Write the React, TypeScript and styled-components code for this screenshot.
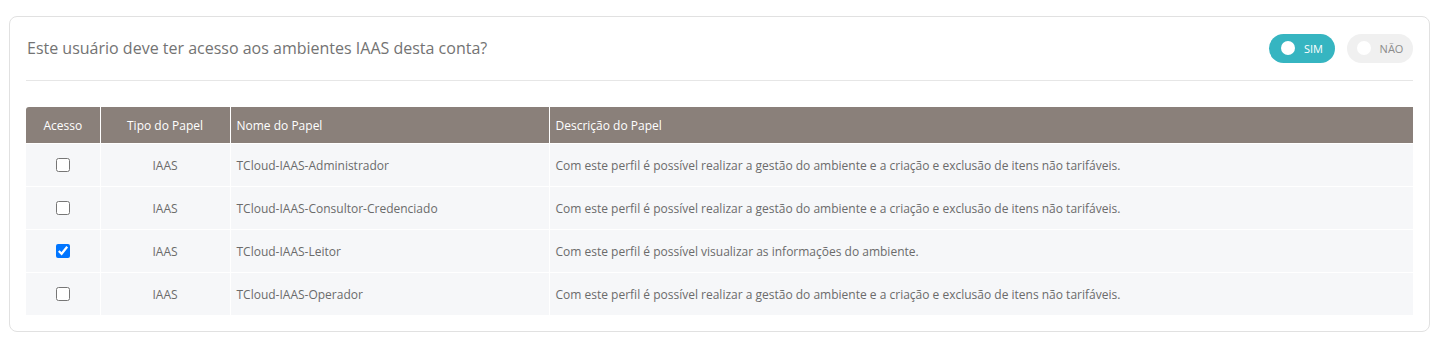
import React, { useState } from 'react'
import styled, { createGlobalStyle } from 'styled-components'

const GlobalStyle = createGlobalStyle`
  body {
    margin: 0;
    background: #ffffff;
    font-family: "Open Sans", "Noto Sans", sans-serif;
  }
`

const Page = styled.div`
  padding: 16px 14px 14px 9px;
`

const Card = styled.div`
  border: 1px solid #e1e1e1;
  border-radius: 8px;
  padding: 0 16px 16px 16px;
  background: #fff;
`

const TitleRow = styled.div`
  display: flex;
  align-items: center;
  justify-content: space-between;
  height: 63px;
  border-bottom: 1px solid #e6e6e6;
  padding-left: 1px;
`

const Title = styled.h3`
  margin: 0;
  font-size: 16px;
  font-weight: 400;
  color: #737373;
  padding-bottom: 2px;
`

const Toggles = styled.div`
  display: flex;
  gap: 12px;
  padding-bottom: 1px;
`

const Pill = styled.button<{ active: boolean }>`
  display: flex;
  align-items: center;
  justify-content: center;
  gap: 9px;
  width: 66px;
  height: 29px;
  padding: 0;
  border: none;
  border-radius: 15px;
  background: ${({ active }) => (active ? '#36b5c1' : '#f0f0f0')};
  color: ${({ active }) => (active ? '#ffffff' : '#8c8c8c')};
  font-family: inherit;
  font-size: 11px;
  cursor: pointer;
`

const Knob = styled.span`
  width: 14px;
  height: 14px;
  border-radius: 50%;
  background: #fff;
`

const Table = styled.table`
  width: 100%;
  margin-top: 26px;
  border-collapse: collapse;
  font-size: 12px;
  color: #6b6b6b;
`

const Th = styled.th<{ align?: string }>`
  background: #8a807a;
  color: #fff;
  font-weight: 400;
  height: 36px;
  padding: 0 6px;
  text-align: ${({ align }) => align || 'left'};
  border-left: 1px solid #fff;
  &:first-child {
    border-left: none;
    border-top-left-radius: 3px;
  }
`

const Td = styled.td<{ align?: string }>`
  background: #f6f7f9;
  height: 42px;
  padding: 0 6px;
  text-align: ${({ align }) => align || 'left'};
  border-left: 1px solid #fff;
  border-top: 1px solid #fff;
  &:first-child {
    border-left: none;
  }
`

const Check = styled.input`
  width: 14px;
  height: 14px;
  margin: 3px 0 0 0;
`

const roles = [
  { name: 'TCloud-IAAS-Administrador', desc: 'Com este perfil é possível realizar a gestão do ambiente e a criação e exclusão de itens não tarifáveis.', checked: false },
  { name: 'TCloud-IAAS-Consultor-Credenciado', desc: 'Com este perfil é possível realizar a gestão do ambiente e a criação e exclusão de itens não tarifáveis.', checked: false },
  { name: 'TCloud-IAAS-Leitor', desc: 'Com este perfil é possível visualizar as informações do ambiente.', checked: true },
  { name: 'TCloud-IAAS-Operador', desc: 'Com este perfil é possível realizar a gestão do ambiente e a criação e exclusão de itens não tarifáveis.', checked: false },
]

export default function App() {
  const [access, setAccess] = useState(true)

  return (
    <Page>
      <GlobalStyle />
      <Card>
        <TitleRow>
          <Title>Este usuário deve ter acesso aos ambientes IAAS desta conta?</Title>
          <Toggles>
            <Pill active={access} onClick={() => setAccess(true)}>
              <Knob />SIM
            </Pill>
            <Pill active={!access} onClick={() => setAccess(false)}>
              <Knob />NÃO
            </Pill>
          </Toggles>
        </TitleRow>

        <Table>
          <colgroup>
            <col style={{ width: 74 }} />
            <col style={{ width: 130 }} />
            <col style={{ width: 319 }} />
            <col />
          </colgroup>
          <thead>
            <tr>
              <Th align="center">Acesso</Th>
              <Th align="center">Tipo do Papel</Th>
              <Th>Nome do Papel</Th>
              <Th>Descrição do Papel</Th>
            </tr>
          </thead>
          <tbody>
            {roles.map((role) => (
              <tr key={role.name}>
                <Td align="center">
                  <Check type="checkbox" defaultChecked={role.checked} />
                </Td>
                <Td align="center">IAAS</Td>
                <Td>{role.name}</Td>
                <Td>{role.desc}</Td>
              </tr>
            ))}
          </tbody>
        </Table>
      </Card>
    </Page>
  )
}
